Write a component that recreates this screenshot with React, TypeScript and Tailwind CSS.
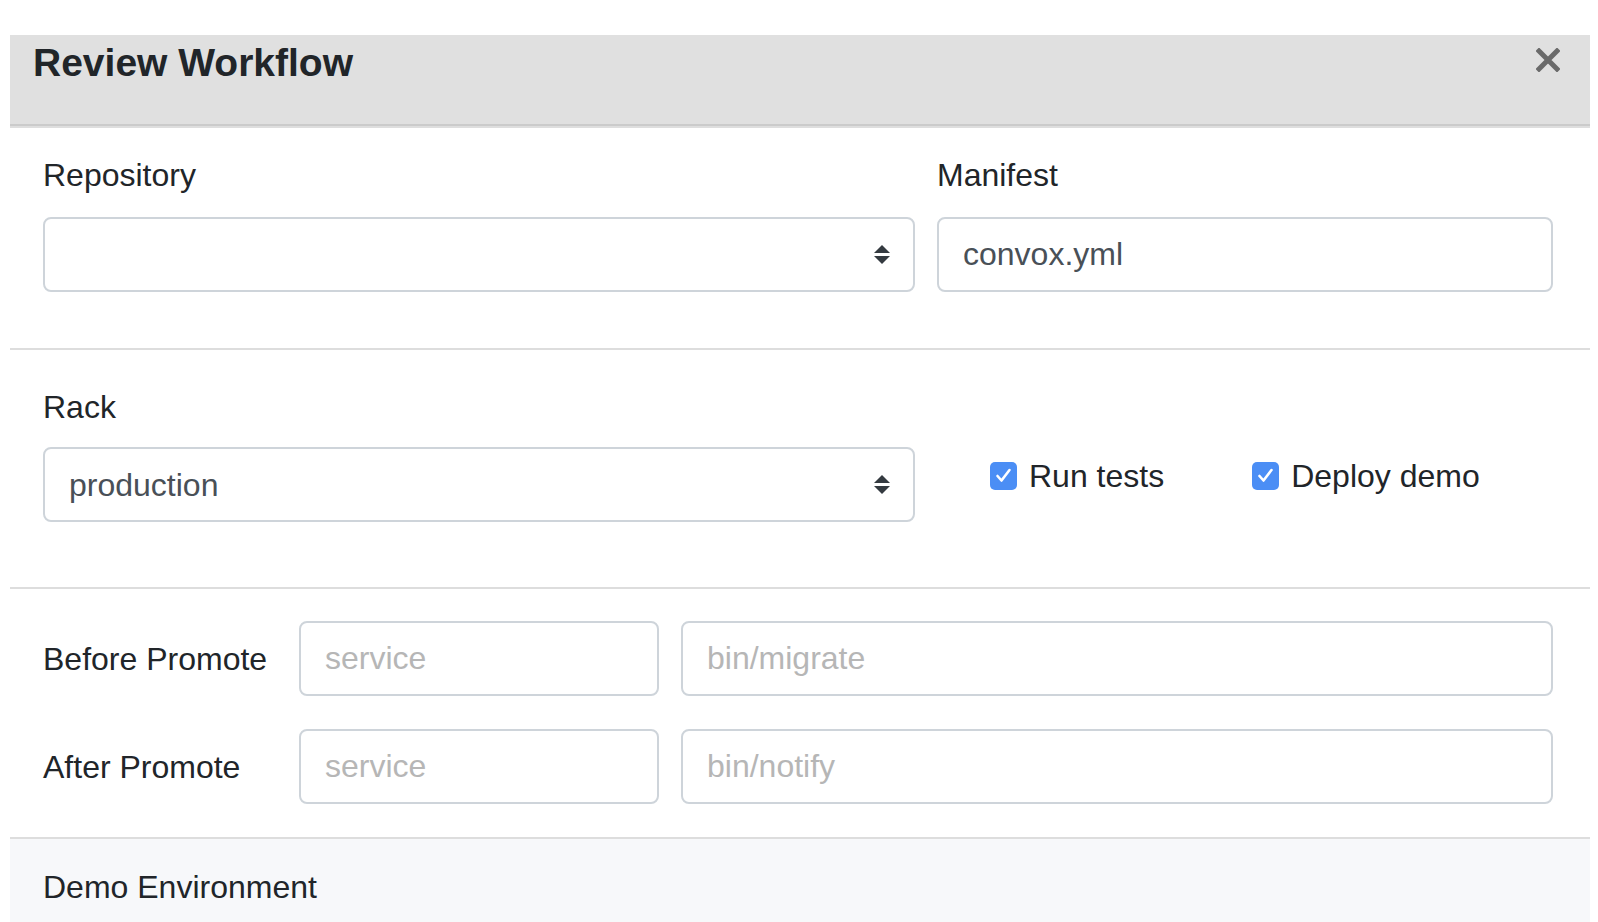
import React from "react";

const SelectArrows: React.FC = () => (
  <svg width="16" height="20" viewBox="0 0 16 20" className="shrink-0">
    <path d="M8 0 L16 8 L0 8 Z" fill="#343a40" />
    <path d="M0 11 L16 11 L8 19 Z" fill="#343a40" />
  </svg>
);

const FakeSelect: React.FC<{ value?: string }> = ({ value }) => (
  <div className="h-[75px] w-full rounded-[8px] border-2 border-[#ced4da] bg-white pl-[24px] pr-[23px] flex items-center justify-between">
    <span className="text-[32px] text-[#495057]">{value}</span>
    <SelectArrows />
  </div>
);

const TextInput: React.FC<{ value?: string; placeholder?: string; className?: string }> = ({
  value,
  placeholder,
  className,
}) => (
  <input
    readOnly
    defaultValue={value}
    placeholder={placeholder}
    className={
      "h-[75px] rounded-[8px] border-2 border-[#ced4da] bg-white px-[24px] text-[32px] text-[#495057] placeholder:text-[#b6b6b6] outline-none " +
      (className ?? "")
    }
  />
);

const Check: React.FC<{ label: string }> = ({ label }) => (
  <label className="flex items-center">
    <span className="w-[27px] h-[28px] rounded-[5px] bg-[#4b8ef5] flex items-center justify-center">
      <svg width="17" height="15" viewBox="0 0 17 15">
        <path d="M2.5 8 L6.5 12.5 L14.5 2" fill="none" stroke="#fff" strokeWidth="2.6" strokeLinecap="round" strokeLinejoin="round" />
      </svg>
    </span>
    <span className="ml-[12px] text-[32px] text-[#212529]">{label}</span>
  </label>
);

const App: React.FC = () => {
  return (
    <div
      className="h-screen bg-white pt-[35px] pl-[10px] pr-[8px] overflow-hidden"
      style={{ fontFamily: '"Liberation Sans", Arial, sans-serif' }}
    >
      <div className="w-full">
        {/* header */}
        <div className="h-[89px] bg-[#e0e0e0] flex items-start justify-between pl-[23px] pr-[30px]">
          <h5 className="mt-[4px] text-[39px] leading-[47px] font-bold text-[#212529]">Review Workflow</h5>
          <button className="mt-[13px] w-[24px] h-[24px]">
            <svg width="24" height="24" viewBox="0 0 24 24">
              <path d="M3 3 L21 21 M21 3 L3 21" stroke="#6a6a6a" strokeWidth="5" strokeLinecap="square" />
            </svg>
          </button>
        </div>
        <div className="h-[2px] bg-[#cbcbcb]" />
        <div className="h-[2px] bg-[#dedede]" />

        {/* repository / manifest */}
        <div className="pt-[23px] pb-[56px] pl-[33px] pr-[37px] flex gap-[22px] leading-[48px]">
          <div className="w-[872px]">
            <div className="text-[32px] text-[#212529] mb-[18px]">Repository</div>
            <FakeSelect />
          </div>
          <div className="flex-1">
            <div className="text-[32px] text-[#212529] mb-[18px]">Manifest</div>
            <TextInput value="convox.yml" className="w-full" />
          </div>
        </div>
        <div className="h-[2px] bg-[#dddddd]" />

        {/* rack */}
        <div className="pt-[33px] pb-[65px] pl-[33px] pr-[37px] flex gap-[22px] leading-[48px]">
          <div className="w-[872px]">
            <div className="text-[32px] text-[#212529] mb-[16px]">Rack</div>
            <FakeSelect value="production" />
          </div>
          <div className="flex-1 flex items-center pt-[46px] pl-[53px] gap-[88px]">
            <Check label="Run tests" />
            <Check label="Deploy demo" />
          </div>
        </div>
        <div className="h-[2px] bg-[#dddddd]" />

        {/* hooks */}
        <div className="pt-[32px] pb-[33px] pl-[33px] pr-[37px] flex flex-col gap-[33px]">
          {[
            ["Before Promote", "bin/migrate"],
            ["After Promote", "bin/notify"],
          ].map(([label, cmd]) => (
            <div key={label} className="flex items-center">
              <div className="w-[256px] text-[32px] text-[#212529]">{label}</div>
              <TextInput placeholder="service" className="w-[360px]" />
              <TextInput placeholder={cmd} className="flex-1 ml-[22px] min-w-0" />
            </div>
          ))}
        </div>
        <div className="h-[2px] bg-[#dddddd]" />

        {/* demo environment */}
        <div className="bg-[#f7f8fa] pt-[24px] pl-[33px] h-[83px]">
          <div className="text-[32px] leading-[48px] text-[#212529]">Demo Environment</div>
        </div>
      </div>
    </div>
  );
};

export default App;
